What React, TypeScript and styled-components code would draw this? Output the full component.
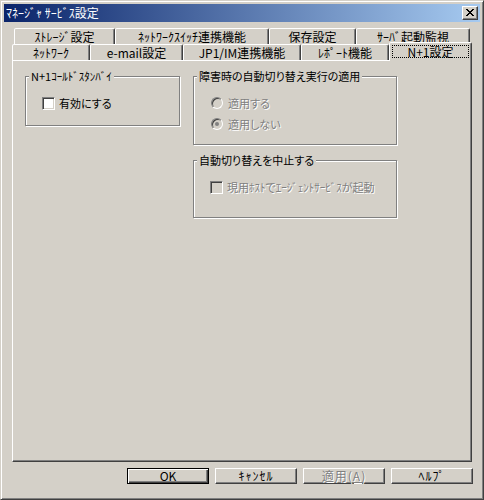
import React from "react";
import styled, { createGlobalStyle, css } from "styled-components";

const FACE = "#d4d0c8";
const SHADOW = "#808080";
const DARK = "#404040";

const Global = createGlobalStyle`
  html, body { margin: 0; padding: 0; background: ${FACE}; }
  body {
    font-family: "Noto Sans CJK JP", "Noto Sans", sans-serif;
    font-size: 12px;
    color: #000;
    font-feature-settings: "palt";
  }
  * { box-sizing: border-box; }
`;

const Window = styled.div`
  width: 484px;
  height: 500px;
  background: ${FACE};
  border: 1px solid;
  border-color: ${FACE} ${DARK} ${DARK} ${FACE};
  box-shadow: inset 1px 1px 0 #fff, inset -1px -1px 0 ${SHADOW};
  padding: 3px;
  display: flex;
  flex-direction: column;
`;

const TitleBar = styled.div`
  height: 18px;
  flex: none;
  background: linear-gradient(to right, #0a246a, #a6caf0);
  display: flex;
  align-items: center;
  justify-content: space-between;
  padding: 0 2px 0 2px;
`;

const TitleText = styled.span`
  color: #fff;
  font-size: 12px;
  line-height: 16px;
  white-space: nowrap;
`;

const raised = css`
  background: ${FACE};
  border: 1px solid;
  border-color: #fff ${DARK} ${DARK} #fff;
  box-shadow: inset -1px -1px 0 ${SHADOW};
`;

const CloseBox = styled.div`
  ${raised};
  width: 16px;
  height: 14px;
  display: flex;
  align-items: center;
  justify-content: center;
  padding-right: 1px;
  padding-bottom: 1px;
`;

const Body = styled.div`
  flex: 1;
  display: flex;
  flex-direction: column;
  padding: 6px 8px 12px 8px;
  min-height: 0;
`;

const TabRow = styled.div<{ $back?: boolean }>`
  display: flex;
  align-items: flex-end;
  height: ${(p) => (p.$back ? 16 : 18)}px;
  margin-top: ${(p) => (p.$back ? 0 : -2)}px;
  padding-left: ${(p) => (p.$back ? 2 : 0)}px;
  flex: none;
`;

const Tab = styled.div<{ $w: number; $selected?: boolean }>`
  width: ${(p) => p.$w}px;
  height: ${(p) => (p.$selected ? 19 : 16)}px;
  margin-bottom: ${(p) => (p.$selected ? -1 : 0)}px;
  flex: none;
  background: ${FACE};
  border: 1px solid;
  border-bottom: none;
  border-color: #fff ${DARK} transparent #fff;
  border-radius: 2px 2px 0 0;
  box-shadow: inset -1px 0 0 ${SHADOW};
  display: flex;
  align-items: ${(p) => (p.$selected ? "flex-start" : "center")};
  justify-content: center;
  padding-top: ${(p) => (p.$selected ? 2 : 0)}px;
  font-size: 12px;
  line-height: 13px;
  white-space: nowrap;
  position: ${(p) => (p.$selected ? "relative" : "static")};
  z-index: ${(p) => (p.$selected ? 1 : "auto")};
`;

const FocusLabel = styled.span`
  flex: 1;
  margin: 0 2px;
  height: 13px;
  border: 1px dotted #000;
  display: flex;
  align-items: center;
  justify-content: center;
  line-height: 11px;
`;

const Panel = styled.div`
  flex: 1;
  border: 1px solid;
  border-color: #fff ${DARK} ${DARK} #fff;
  box-shadow: inset -1px -1px 0 ${SHADOW};
  padding: 8px 0 0 12px;
  display: flex;
  align-items: flex-start;
  gap: 13px;
  min-height: 0;
`;

const Column = styled.div<{ $w: number }>`
  width: ${(p) => p.$w}px;
  display: flex;
  flex-direction: column;
  gap: 8px;
`;

const Group = styled.fieldset<{ $h: number }>`
  margin: 0;
  min-width: 0;
  height: ${(p) => p.$h}px;
  border: 1px solid ${SHADOW};
  box-shadow: inset 1px 1px 0 #fff, 1px 1px 0 #fff;
  padding: 13px 0 0 16px;
  display: flex;
  flex-direction: column;
  gap: 7px;
`;

const Legend = styled.legend`
  margin-left: -13px;
  padding: 0 2px;
  line-height: 14px;
  font-size: 11px;
  white-space: nowrap;
  background: ${FACE};
`;

const OptionRow = styled.div<{ $disabled?: boolean }>`
  display: flex;
  align-items: center;
  gap: 4px;
  height: 14px;
  white-space: nowrap;
  font-size: 11px;
  line-height: 14px;
  color: ${(p) => (p.$disabled ? SHADOW : "#000")};
  text-shadow: ${(p) => (p.$disabled ? "1px 1px 0 #fff" : "none")};
`;

const CheckBox = styled.span<{ $disabled?: boolean }>`
  width: 13px;
  height: 13px;
  flex: none;
  border: 1px solid;
  border-color: ${SHADOW} #fff #fff ${SHADOW};
  box-shadow: inset 1px 1px 0 ${DARK}, inset -1px -1px 0 ${FACE};
  background: ${(p) => (p.$disabled ? FACE : "#fff")};
`;

const Radio = styled.span<{ $checked?: boolean }>`
  width: 12px;
  height: 12px;
  flex: none;
  border-radius: 50%;
  border: 1px solid;
  border-color: ${SHADOW} #fff #fff ${SHADOW};
  box-shadow: inset 1px 1px 0 ${DARK}, inset -1px -1px 0 ${FACE};
  background: ${FACE};
  display: flex;
  align-items: center;
  justify-content: center;
  margin-left: 1px;
  margin-right: 1px;
  &::after {
    content: "";
    width: 4px;
    height: 4px;
    border-radius: 50%;
    background: ${SHADOW};
    display: ${(p) => (p.$checked ? "block" : "none")};
  }
`;

const ButtonRow = styled.div`
  flex: none;
  display: flex;
  justify-content: flex-end;
  gap: 6px;
  margin-top: 6px;
  margin-right: -1px;
  height: 16px;
`;

const Button = styled.div<{ $default?: boolean; $disabled?: boolean }>`
  width: 82px;
  height: 16px;
  background: ${FACE};
  border: 1px solid;
  border-color: ${(p) => (p.$default ? "#000" : `#fff ${DARK} ${DARK} #fff`)};
  box-shadow: ${(p) =>
    p.$default
      ? `inset 1px 1px 0 #fff, inset -1px -1px 0 ${DARK}, inset -2px -2px 0 ${SHADOW}`
      : `inset -1px -1px 0 ${SHADOW}`};
  display: flex;
  align-items: center;
  justify-content: center;
  font-size: 12px;
  line-height: 14px;
  letter-spacing: ${(p) => (p.$default ? 0 : 1)}px;
  white-space: nowrap;
  color: ${(p) => (p.$disabled ? SHADOW : "#000")};
  text-shadow: ${(p) => (p.$disabled ? "1px 1px 0 #fff" : "none")};
`;

const CloseGlyph = () => (
  <svg width="8" height="7" viewBox="0 0 8 7" shapeRendering="crispEdges">
    <path
      d="M0 0h2v1H0zM6 0h2v1H6zM1 1h2v1H1zM5 1h2v1H5zM2 2h4v1H2zM3 3h2v1H3zM2 4h4v1H2zM1 5h2v1H1zM5 5h2v1H5zM0 6h2v1H0zM6 6h2v1H6z"
      fill="#000"
    />
  </svg>
);

const backTabs: [string, number][] = [
  ["ｽﾄﾚｰｼﾞ設定", 101],
  ["ﾈｯﾄﾜｰｸｽｲｯﾁ連携機能", 154],
  ["保存設定", 87],
  ["ｻｰﾊﾞ起動監視", 114],
];

const frontTabs: [string, number][] = [
  ["ﾈｯﾄﾜｰｸ", 78],
  ["e-mail設定", 93],
  ["JP1/IM連携機能", 118],
  ["ﾚﾎﾟｰﾄ機能", 88],
];

export default function App() {
  return (
    <>
      <Global />
      <Window>
        <TitleBar>
          <TitleText>ﾏﾈｰｼﾞｬ ｻｰﾋﾞｽ設定</TitleText>
          <CloseBox>
            <CloseGlyph />
          </CloseBox>
        </TitleBar>
        <Body>
          <TabRow $back>
            {backTabs.map(([label, w]) => (
              <Tab key={label} $w={w}>
                {label}
              </Tab>
            ))}
          </TabRow>
          <TabRow>
            {frontTabs.map(([label, w]) => (
              <Tab key={label} $w={w}>
                {label}
              </Tab>
            ))}
            <Tab $w={83} $selected>
              <FocusLabel>N+1設定</FocusLabel>
            </Tab>
          </TabRow>
          <Panel>
            <Column $w={155}>
              <Group $h={57}>
                <Legend>N+1ｺｰﾙﾄﾞｽﾀﾝﾊﾞｲ</Legend>
                <OptionRow>
                  <CheckBox />
                  <span>有効にする</span>
                </OptionRow>
              </Group>
            </Column>
            <Column $w={204}>
              <Group $h={76}>
                <Legend>障害時の自動切り替え実行の適用</Legend>
                <OptionRow $disabled>
                  <Radio />
                  <span>適用する</span>
                </OptionRow>
                <OptionRow $disabled>
                  <Radio $checked />
                  <span>適用しない</span>
                </OptionRow>
              </Group>
              <Group $h={65}>
                <Legend>自動切り替えを中止する</Legend>
                <OptionRow $disabled>
                  <CheckBox $disabled />
                  <span>現用ﾎｽﾄでｴｰｼﾞｪﾝﾄｻｰﾋﾞｽが起動</span>
                </OptionRow>
              </Group>
            </Column>
          </Panel>
          <ButtonRow>
            <Button $default>OK</Button>
            <Button>ｷｬﾝｾﾙ</Button>
            <Button $disabled>
              <span>
                適用(<u>A</u>)
              </span>
            </Button>
            <Button>ﾍﾙﾌﾟ</Button>
          </ButtonRow>
        </Body>
      </Window>
    </>
  );
}
